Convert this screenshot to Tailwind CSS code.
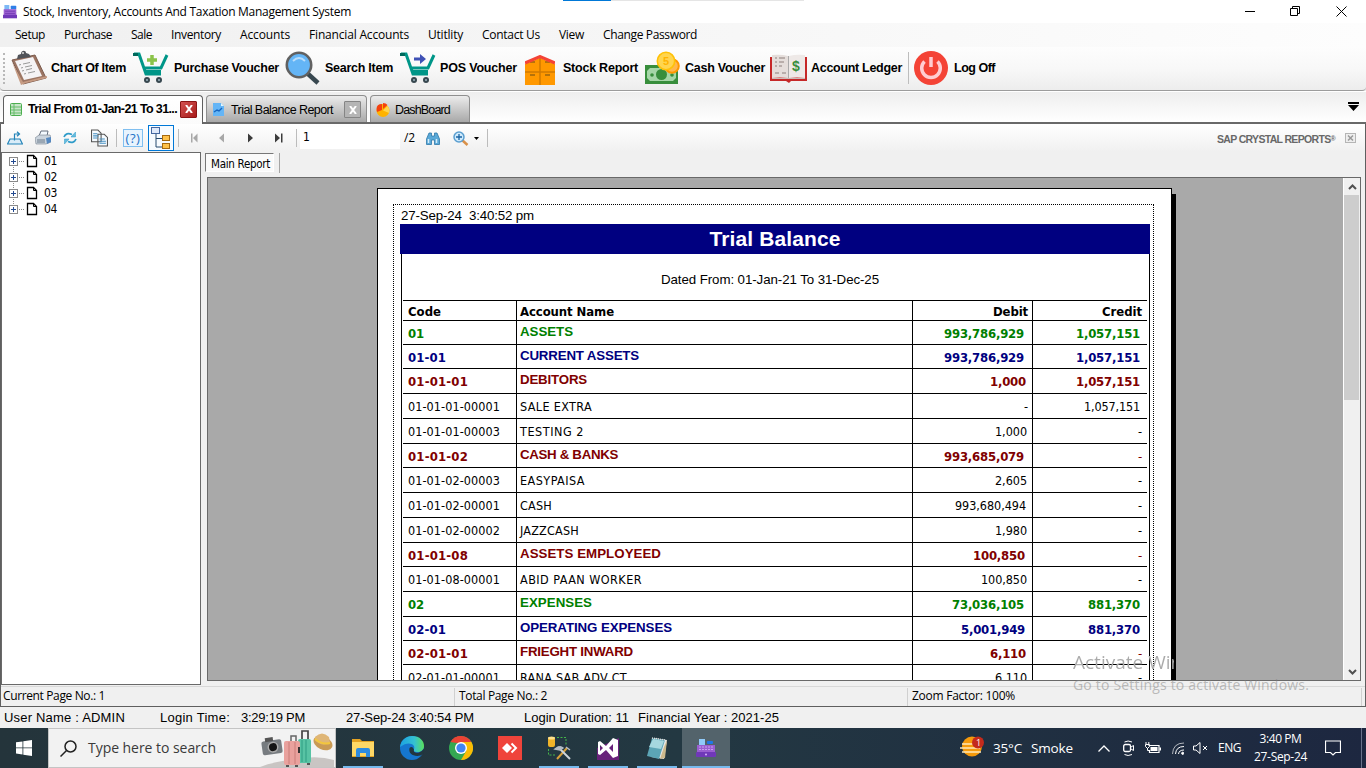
<!DOCTYPE html>
<html lang="en">
<head>
<meta charset="utf-8">
<title>Stock, Inventory, Accounts And Taxation Management System</title>
<script src="https://cdn.jsdelivr.net/npm/@tailwindcss/browser@4"></script>
</head>
<body class="h-[768px] w-[1366px] overflow-hidden bg-[#f0f0f0] font-['Open_Sans',sans-serif] text-[12px] leading-4 text-black whitespace-nowrap">
<svg class="hidden">
  <symbol id="register" viewBox="0 0 20 20"><rect x="3" y="1" width="6" height="8" fill="#90caf9"/><rect x="11" y="3" width="6" height="3" rx="1" fill="#1e78e8"/><path d="M1 7h18v8H1z" fill="#9a5fd0"/><path d="M3 9h14M3 11.500h14" stroke="#c9a0f0" stroke-dasharray="2 1"/><rect x="0" y="14" width="20" height="5" rx="1" fill="#7038b8"/><circle cx="10" cy="16.500" r="1" fill="#d1b3f5"/></symbol>
  <symbol id="cart" viewBox="0 0 36 34"><path d="M1 3h5l7 20h15M11 17h17l6-13" fill="none" stroke="#009688" stroke-width="3"/><path d="M12 19h16v4H12z" fill="#009688"/><path d="M0 2h5v3H0z" fill="#00695c"/><circle cx="14" cy="29" r="3" fill="#37474f"/><circle cx="26" cy="29" r="3" fill="#37474f"/><circle cx="14" cy="29" r="1" fill="#9eb4bf"/><circle cx="26" cy="29" r="1" fill="#9eb4bf"/></symbol>
  <symbol id="doc" viewBox="0 0 12 14"><path d="M1.500 1.500h6l3 3v8h-9z" fill="#fff" stroke="#000" stroke-width="1.300"/><path d="M7.500 1.500v3h3" fill="none" stroke="#000"/></symbol>
</svg>

<header class="relative flex h-[23px] items-center bg-white pl-[3px]">
  <svg class="h-[14px] w-[14px]" viewBox="0 0 20 20" preserveAspectRatio="none"><rect x="2" y="0" width="7" height="8" fill="#7db8f5"/><rect x="11" y="1" width="8" height="5" rx="1" fill="#2f7fe8"/><path d="M1 6h18v9H1z" fill="#9a5fd0"/><path d="M0 14h20v5H0z" fill="#7038b8"/><path d="M3 9h14M3 12h14" stroke="#7a42b8" stroke-width="1.500"/></svg>
  <span class="ml-[6px]" data-w="328">Stock, Inventory, Accounts And Taxation Management System</span>
  <div class="absolute left-[563px] top-0 flex h-px w-[241px] bg-[#e5e5e5]"><i class="h-px w-[48px] bg-[#0078d7]"></i></div>
  <svg class="ml-auto mr-[17px] mb-[2px] h-[14px] w-[104px]" viewBox="0 0 104 14" fill="none" stroke="#000"><path d="M0 7.500h10M45.500 4.500h7v7h-7zM47.500 4V2.500h7v7H53M91.500 2.500l10 10M101.500 2.500l-10 10"/></svg>
</header>

<nav class="flex h-6 items-center gap-[19px] bg-gradient-to-r from-[#f0f0f0] to-[#fdfdfd] pl-[15px]">
  <span data-w="30">Setup</span><span data-w="48">Purchase</span><span data-w="21">Sale</span><span data-w="50">Inventory</span><span data-w="50">Accounts</span><span data-w="100">Financial Accounts</span><span data-w="35">Utitlity</span><span data-w="58">Contact Us</span><span data-w="25">View</span><span data-w="94">Change Password</span>
</nav>

<section class="flex h-[44px] items-center rounded-b-sm border-b border-[#9c9c9c] bg-gradient-to-b from-[#fdfdfd] via-[#f8f8f8] to-[#ededed] pb-px font-['Liberation_Sans',sans-serif] text-[12.500px] font-bold">
  <i class="ml-[3px] mr-[6px] h-[31px] w-0 border-l-2 border-dotted border-[#b8b8b8]"></i>
  <svg class="h-9 w-[36px]" viewBox="0 0 36 36"><path d="M1 10L24 5L35 28L12 34Z" fill="#9c7563" stroke="#7b5a4c"/><path d="M1 12L10 35L15 33L36 28V26L12 32Z" fill="#c69b83"/><path d="M4 11L22 7L31 26L13 30Z" fill="#f5f3f5"/><path d="M8 15l2-.5M12 14l7-1.500M10 18l2-.5M14 17l7-1.500M11 21l2-.5M15 20l6-1.500M13 24l2-.5M17 23l7-1.500" stroke="#999"/><path d="M6 9l1-4 3-1c0-4 5-4 5-1l3 1 2 3z" fill="#505359"/><circle cx="12" cy="3" r="1" fill="#ddd"/></svg>
  <span class="ml-1" data-w="75">Chart Of Item</span>
  <div class="relative ml-[7px] h-[34px] w-9"><svg class="h-[34px] w-9"><use href="#cart"/></svg><svg class="absolute left-[14px] top-[4px] h-[10px] w-[10px]" viewBox="0 0 10 10"><path d="M5 0v10M0 5h10" stroke="#8bc34a" stroke-width="3.500"/></svg></div>
  <span class="ml-[5px]" data-w="105">Purchase Voucher</span>
  <svg class="ml-[6px] h-[34px] w-[35px]" viewBox="0 0 35 34"><path d="M22 22l11 10" stroke="#37474f" stroke-width="4.500"/><circle cx="14" cy="14" r="12.200" fill="#64b5f6" stroke="#616161" stroke-width="2.600"/><path d="M8 10q6-6 12 0" stroke="#bbdefb" stroke-width="1.800" fill="none"/></svg>
  <span class="ml-[5px]" data-w="68">Search Item</span>
  <div class="relative ml-[7px] h-[34px] w-9"><svg class="h-[34px] w-9"><use href="#cart"/></svg><svg class="absolute left-[14px] top-[3px] h-[10px] w-[12px]" viewBox="0 0 12 10"><path d="M0 3.500h6V0l6 5-6 5V6.500H0z" fill="#3f51b5"/></svg></div>
  <span class="ml-[4px]" data-w="77">POS Voucher</span>
  <svg class="ml-[8px] mt-[3px] h-[30px] w-[30px]" viewBox="0 0 30 30"><path d="M0 9L15 3L30 9V30H0z" fill="#ff9800"/><path d="M15 3v27M0 17h30" stroke="#d17a00" stroke-width="1.500"/><path d="M5 7h5M20 7h5M5 20h5M20 20h5" stroke="#6b4c17"/><path d="M0 8L15 1.500L30 8" stroke="#f44336" stroke-width="3" fill="none"/></svg>
  <span class="ml-[8px]" data-w="75">Stock Report</span>
  <svg class="ml-[7px] h-[34px] w-[35px]" viewBox="0 0 35 34"><rect y="14" width="33" height="19" fill="#388e3c"/><path d="M5 17h23l3 3v7l-3 3H5l-3-3v-7z" fill="#a5d6a7"/><circle cx="16.500" cy="23.500" r="5.500" fill="#388e3c"/><circle cx="7" cy="24" r="1.800" fill="#388e3c"/><circle cx="27" cy="24" r="1.800" fill="#388e3c"/><circle cx="27" cy="15" r="6.800" fill="#ffb74d" stroke="#ff9800" stroke-width="2"/><circle cx="21" cy="10" r="8.700" fill="#ffd54f" stroke="#ffc107" stroke-width="1.600"/><text x="18" y="14" font-size="11" fill="#ffb300" font-weight="bold">5</text></svg>
  <span class="ml-[5px]" data-w="80">Cash Voucher</span>
  <svg class="ml-[5px] h-[30px] w-[37px]" viewBox="0 0 37 30"><path d="M0 4h37v24H21l-2 2-3-2H0z" fill="#c62828"/><path d="M2 2q9-1 16 1v22q-8-1-16 0z" fill="#e5dedb"/><path d="M35 2q-9-1-16 1v22q8-1 16 0z" fill="#eee9e7"/><path d="M2 25.500h33" stroke="#c9bcb8"/><path d="M18.500 3v22" stroke="#aaa"/><path d="M5 5h2M9 5h6M5 9h2M9 9h5M5 13h2M9 13h3M5 20h4M12 20h4" stroke="#8d7f7a"/><text x="22" y="18" font-size="14" fill="#388e3c" font-weight="bold">$</text></svg>
  <span class="ml-[4px]" data-w="91">Account Ledger</span>
  <i class="ml-[6px] mr-[5px] h-8 w-px bg-[#bdbdbd]"></i>
  <svg class="h-[34px] w-[34px]" viewBox="0 0 34 34"><circle cx="17" cy="17" r="17" fill="#f44336"/><path d="M10.500 10.500A9.300 9.300 0 1 0 23.500 10.500M17 6v10" fill="none" stroke="#ffcdd2" stroke-width="3.500"/></svg>
  <span class="ml-[6px]" data-w="41">Log Off</span>
</section>

<section class="flex h-[33px] items-end border-b-2 border-[#696969] border-t border-t-white bg-gradient-to-b from-[#eeeeee] to-white pl-[3px] font-['Liberation_Sans',sans-serif] text-[13px]">
  <div class="-mb-[2px] flex h-[29px] w-[200px] items-center rounded-t border border-b-0 border-[#5f5f5f] bg-gradient-to-b from-white to-[#fbfbfb] pb-[2px] pl-[6px]">
    <svg class="h-[13px] w-3" viewBox="0 0 12 13"><rect x=".5" y=".5" width="11" height="12" rx="1" fill="#c8e6c9" stroke="#4caf50"/><path d="M1 4h10M1 7h10M1 10h10M4 1v11" stroke="#66bb6a"/></svg>
    <span class="ml-[6px] text-[12.500px] font-bold" data-w="149">Trial From 01-Jan-21 To 31...</span>
    <span class="ml-[3px] flex h-[17px] w-[17px] items-center justify-center rounded-[1px] border border-[#8b1515] bg-gradient-to-br from-[#d35050] to-[#a81818]"><svg class="h-2 w-2" viewBox="0 0 8 8"><path d="M1 0l6 8M7 0L1 8" stroke="#fff" stroke-width="2"/></svg></span>
  </div>
  <div class="ml-[3px] flex h-[27px] w-[161px] items-center rounded-t border border-b-0 border-[#8f8f8f] bg-gradient-to-b from-[#ececec] to-[#a9a9a9] pl-[6px] pt-px text-[12.500px]">
    <svg class="h-[14px] w-[11px]" viewBox="0 0 11 14"><path d="M0 0h8l3 3v10H0z" fill="#64b5f6"/><path d="M8 0v3h3" fill="#e1f5fe"/><path d="M1 9l3-2 2 1 3-3" stroke="#1565c0" stroke-width="1.400" fill="none"/></svg>
    <span class="ml-[7px]" data-w="102">Trial Balance Report</span>
    <span class="ml-[11px] flex h-[17px] w-[17px] items-center justify-center rounded-[1px] border border-[#858585] bg-[#b5b5b5]"><svg class="h-2 w-2" viewBox="0 0 8 8"><path d="M1 0l6 8M7 0L1 8" stroke="#fff" stroke-width="2"/></svg></span>
  </div>
  <div class="ml-[3px] flex h-[27px] w-[100px] items-center rounded-t border border-b-0 border-[#8f8f8f] bg-gradient-to-b from-[#ececec] to-[#a9a9a9] pl-[5px] pt-px text-[12.500px]">
    <svg class="h-[14px] w-[14px]" viewBox="0 0 14 14"><circle cx="7" cy="7.500" r="6.500" fill="#ffb300"/><path d="M7 7.500L11.500 3Q14 6 13 10z" fill="#ffd54f"/><path d="M6 7L1 9Q-1 1 6 1zM7 6V0q3 0 4.500 2z" fill="#f4400f"/></svg>
    <span class="ml-[5px]" data-w="55">DashBoard</span>
  </div>
  <svg class="mb-[11px] ml-auto mr-[7px] h-[9px] w-[11px]" viewBox="0 0 11 9"><path d="M0 0h11v2H0zM0 3h11L5.500 9z"/></svg>
</section>

<main class="h-[583px] border-x border-b border-[#5f5f5f] bg-[#f0f0f0]">
  <div class="flex h-[28px] items-center bg-gradient-to-b from-white to-[#f0f0f0] text-[12px]">
    <svg class="ml-[6px] h-[14px] w-4" viewBox="0 0 16 14" fill="none"><path d="M3 8h10l2.500 5H.5z" fill="#d9ecf8" stroke="#2383b8" stroke-width="1.200"/><path d="M7.500 9.500V3h4M10 .8L12.500 3L10 5.200" stroke="#2383b8" stroke-width="1.200"/></svg>
    <svg class="ml-3 h-[16px] w-4" viewBox="0 0 16 16"><path d="M4 6l2-5h7l-1 5z" fill="#f4faff" stroke="#667080"/><path d="M0 8l4-3h11l1 2v5l-5 2H1z" fill="#cbd4dd" stroke="#76828e" stroke-width=".6"/><path d="M11 8l5-1v5l-4 2z" fill="#5588c0"/><path d="M2 10h8M2 12h8" stroke="#6a7a8a"/></svg>
    <svg class="ml-3 h-3 w-[14px]" viewBox="0 0 14 12" fill="none" stroke="#2e9bc9" stroke-width="1.700"><path d="M1 5Q3 0 9 2.500M13 7Q11 12 5 9.500"/><path d="M12.500 0v5H8zM1.500 12V7H6z" fill="#64bde0" stroke-width=".5"/></svg>
    <svg class="ml-[14px] h-[18px] w-[17px]" viewBox="0 0 16 16"><path d="M.5.5h6l3 3v8h-9zM6.500 4.500h6l3 3v8h-9z" fill="#f6fbff" stroke="#555"/><path d="M2 4h4M2 6h5M2 8h4M8 9h5M8 11h6M8 13h6" stroke="#4690c2"/></svg>
    <i class="ml-[8px] h-[18px] w-px bg-[#bcbcbc]"></i>
    <div class="ml-[6px] flex h-[18px] w-[20px] items-center justify-center border border-[#80bff0] bg-[#e8f4fe] text-[13px] text-[#1e73c8]"><span data-w="15">(?)</span></div>
    <div class="ml-[5px] flex h-[26px] w-[26px] items-center justify-center border border-[#0078d7] bg-[#f7fbff]"><svg class="h-[22px] w-5" viewBox="0 0 20 22"><path d="M5 7v13h6M5 11.500h6" fill="none" stroke="#264a6e"/><rect x=".5" y=".5" width="8" height="6" fill="#dfe9fa" stroke="#4467a0"/><rect x="11.500" y="8.500" width="7" height="5" fill="#ffc24a" stroke="#a66a10"/><rect x="11.500" y="16.500" width="7" height="5" fill="#ffc24a" stroke="#a66a10"/></svg></div>
    <i class="ml-[4px] h-[18px] w-px bg-[#bcbcbc]"></i>
    <svg class="ml-[12px] h-[10px] w-[93px]" viewBox="0 0 93 10"><path d="M0 .5h1.500v9H0zM6.500 .5v9L2 5zM33 .5v9L28 5z" fill="#a8a8a8"/><path d="M57 .5v9L62 5zM84 .5v9L89 5zM90 .5h1.500v9H90z" fill="#3c3c3c"/></svg>
    <i class="ml-[12px] h-[18px] w-px bg-[#bcbcbc]"></i>
    <div class="ml-[3px] h-[22px] w-[100px] bg-white pl-[3px] pt-[2px] font-['DejaVu_Sans_Condensed',sans-serif]">1</div>
    <span class="ml-1" data-w="11">/2</span>
    <svg class="ml-[11px] h-[13px] w-[14px]" viewBox="0 0 14 13"><path d="M3 1h2.500v3h3V1H11l2.500 6v5.500H8.500V8h-3v4.500H.5V7z" fill="#5aa9d8" stroke="#2f79aa" stroke-width=".8"/><path d="M2.500 7v4M10.500 7v4" stroke="#d5edfa" stroke-width="1.500"/></svg>
    <svg class="ml-[13px] h-[15px] w-[16px]" viewBox="0 0 16 15"><path d="M9 9l5.500 5" stroke="#d9914a" stroke-width="2.500"/><circle cx="6" cy="6" r="5" fill="#cfeafc" stroke="#5b9fd0" stroke-width="1.500"/><path d="M6 3v6M3 6h6" stroke="#1b64a4" stroke-width="1.300"/></svg>
    <svg class="ml-[5px] h-[3px] w-[5px]" viewBox="0 0 5 3"><path d="M0 0h5L2.500 3z"/></svg>
    <i class="ml-2 h-[18px] w-px bg-[#bcbcbc]"></i>
    <span class="ml-auto mt-[4px] font-['Liberation_Sans',sans-serif] text-[10.500px] font-bold text-[#686868]" data-w="118">SAP CRYSTAL REPORTS<span class="relative -top-[2px] text-[7px]">®</span></span>
    <svg class="ml-[10px] mr-[9px] h-[10px] w-[11px]" viewBox="0 0 11 10"><rect x=".5" y=".5" width="10" height="9" fill="#eee" stroke="#b5b5b5"/><path d="M3 2.500l5 5M8 2.500l-5 5" stroke="#999" stroke-width="1.500"/></svg>
  </div>

  <div class="flex h-[533px]">
    <aside class="h-[533px] w-[200px] border border-[#696969] bg-white pl-[7px] font-['DejaVu_Sans_Condensed',sans-serif]">
      <div id="tree" class="flex flex-col"></div>
    </aside>
    <div class="ml-[4px] h-[533px] grow">
      <div class="flex h-[25px] font-['DejaVu_Sans_Condensed',sans-serif]">
        <div class="mt-px h-[19px] w-[69px] border border-[#fff] border-l-[#777] border-t-[#777] bg-[#fafafa] pl-[5px] pt-[2px] text-[11.500px]"><span data-w="59">Main Report</span></div>
        <i class="ml-[5px] mt-px h-5 w-px bg-[#a5a5a5]"></i>
      </div>
      <div class="ml-[2px] flex h-[504px] w-[1154px] overflow-hidden border border-[#696969] bg-[#a9a9a9]">
        <div class="flex grow items-start pl-[169px] pt-[10px]">
          <article class="h-[600px] w-[795px] shrink-0 border border-black bg-white px-[15px] pt-[15px]">
            <div class="h-[560px] w-[761px] border border-dotted border-black pl-[6px] font-['Liberation_Sans',sans-serif]">
              <p class="h-[19px] pl-[1px] pt-[3px] text-[13.300px]"><span data-w="133">27-Sep-24&nbsp; 3:40:52 pm</span></p>
              <div class="h-[30px] w-[750px] bg-[#000080] text-center text-[21px] font-bold leading-[30px] text-white"><span data-w="131">Trial Balance</span></div>
              <div class="ml-px w-[749px] border-x border-black pl-px">
                <p class="h-[46px] pl-[258px] pt-[18px] text-[13.300px]"><span data-w="218">Dated From: 01-Jan-21 To 31-Dec-25</span></p>
                <div id="rows" class="w-[744px]"></div>
              </div>
            </div>
          </article>
          <i class="mt-[6px] h-[600px] w-1 bg-black"></i>
        </div>
        <div class="h-[502px] w-[17px] border-l border-white bg-[#f0f0f0]">
          <svg class="mx-auto h-[17px] w-[9px]" viewBox="0 0 9 17"><path d="M1 11l3.500-3.500L8 11" fill="none" stroke="#505050" stroke-width="2"/></svg>
          <div class="h-[205px] w-[15px] bg-[#cdcdcd]"></div>
          <svg class="mx-auto mt-[263px] h-[17px] w-[9px]" viewBox="0 0 9 17"><path d="M1 7l3.500 3.500L8 7" fill="none" stroke="#505050" stroke-width="2"/></svg>
        </div>
      </div>
    </div>
  </div>
  <div class="mt-px flex h-[20px] items-center border-t border-[#d8d8d8] pl-[2px]">
    <span class="h-[18px] w-[451px]"><span data-w="102">Current Page No.: 1</span></span>
    <span class="h-[18px] w-[453px] border-l border-[#d0d0d0] pl-[4px]"><span data-w="88">Total Page No.: 2</span></span>
    <span class="h-[18px] w-[455px] border-x border-[#d0d0d0] pl-[4px]"><span data-w="103">Zoom Factor: 100%</span></span>
  </div>
</main>

<footer class="flex h-[21px] items-center pl-1 font-['Liberation_Sans',sans-serif] text-[13px]">
  <span class="w-[156px]"><span data-w="121">User Name : ADMIN</span></span>
  <span class="w-[81px]"><span data-w="70">Login Time:</span></span>
  <span class="w-[105px]"><span data-w="64">3:29:19 PM</span></span>
  <span class="w-[178px]"><span data-w="128">27-Sep-24 3:40:54 PM</span></span>
  <span class="w-[114px]"><span data-w="105">Login Duration: 11</span></span>
  <span data-w="141">Financial Year : 2021-25</span>
</footer>

<section class="flex h-10 items-center bg-gradient-to-r from-[#24343b] via-[#233842] to-[#1d2740] text-white">
  <div class="flex h-10 w-12 items-center justify-center"><svg class="h-4 w-4" viewBox="0 0 16 16" fill="#fff"><path d="M0 2.300l6.500-.9v6.100H0zM7.300 1.300L16 0v7.500H7.300zM0 8.300h6.500v6.200L0 13.600zM7.300 8.300H16V16l-8.700-1.300z"/></svg></div>
  <div class="flex h-10 w-[288px] items-center border border-[#c4c4c4] bg-[#f2f2f2] pl-[11px] text-[14px] text-[#3a3a3a]">
    <svg class="h-[17px] w-[17px]" viewBox="0 0 17 17" fill="none" stroke="#222" stroke-width="1.500"><circle cx="10.500" cy="6.500" r="5.500"/><path d="M6.500 10.500L.5 16.500"/></svg>
    <span class="ml-[11px]" data-w="128">Type here to search</span>
    <svg class="ml-auto mr-[1px] h-[38px] w-[76px]" viewBox="0 0 76 38"><path d="M2 38Q14 33 38 30Q60 26 76 31v7z" fill="#c9c5c3"/><g transform="rotate(-8 16 18)"><rect x="4" y="11" width="20" height="14" rx="2" fill="#777c80"/><rect x="8" y="8" width="8" height="4" fill="#555"/><circle cx="15" cy="18" r="5.500" fill="#aaa"/><circle cx="15" cy="18" r="4" fill="#151515"/></g><path d="M44 10V2h6v9" fill="none" stroke="#444" stroke-width="1.700"/><rect x="40" y="10" width="13" height="24" rx="2" fill="#58c3a4"/><path d="M44 11v22M48 11v22" stroke="#2f9d83"/><path d="M33 13V7h5v6" fill="none" stroke="#666" stroke-width="1.500"/><rect x="26" y="12" width="16" height="24" rx="2" fill="#e9a19d"/><path d="M31 13v22M37 13v22" stroke="#c97c79"/><path d="M41 18v6" stroke="#333" stroke-width="2"/><path d="M28 37h3M37 37h3M49 35h3" stroke="#555" stroke-width="2"/><ellipse cx="65" cy="14" rx="10" ry="6.500" transform="rotate(25 65 14)" fill="#c99a55"/><path d="M57 8q7-7 14 0l1 6q-9 4-15-3z" fill="#dfb677"/><path d="M57 10q7 6 15 4" fill="none" stroke="#f3c63d" stroke-width="2"/></svg>
  </div>
  <div class="flex h-10 items-stretch pl-[7px]">
    <div class="mr-[9px] flex w-10 items-center justify-center border-b-2 border-[#76b9ed] pt-[2px]"><svg class="h-[18px] w-[22px]" viewBox="0 0 22 18"><path d="M0 0h8l2 2h12v16H0z" fill="#e5a323"/><path d="M0 3h22v14H0z" fill="#ffd866"/><path d="M4 18v-7q0-2 2-2h10q2 0 2 2v7h-4v-4H8v4z" fill="#2f8ce0"/></svg></div>
    <div class="mr-[9px] flex w-10 items-center justify-center border-b-2 border-transparent pt-[2px]"><svg class="h-6 w-6" viewBox="0 0 24 24"><defs><linearGradient id="e"><stop stop-color="#1ba1e2"/><stop offset=".6" stop-color="#35c1d1"/><stop offset="1" stop-color="#5be05a"/></linearGradient></defs><circle cx="12" cy="12" r="12" fill="#1576cf"/><path d="M0 11C1 4 6 0 12 0c8 0 12 5 12 10 0 4-3 6-7 6-3 0-4-1-3-3 2-4-5-9-14-2z" fill="url(#e)"/><path d="M14 13.500C13 16 16 17.500 19 16.500Q22 15.500 24 12.500L24 17.500L20.500 19.500C14 21 8 18 9.500 12Q12 9.500 14 13.500z" fill="#22363f"/></svg></div>
    <div class="mr-[9px] flex w-10 items-center justify-center border-b-2 border-transparent pt-[2px]"><svg class="h-6 w-6" viewBox="0 0 24 24"><circle cx="12" cy="12" r="12" fill="#34a853"/><path d="M12 12L1.600 6A12 12 0 0 1 22.400 6z" fill="#ea4335"/><path d="M12 6h10.400A12 12 0 0 1 12 24l5.200-9z" fill="#fbbc05"/><path d="M1.600 6L7 15l3-8z" fill="#34a853"/><path d="M1.600 6A12 12 0 0 1 12 0v7z" fill="#ea4335"/><circle cx="12" cy="12" r="6" fill="#fff"/><circle cx="12" cy="12" r="4.600" fill="#4285f4"/></svg></div>
    <div class="mr-[9px] flex w-10 items-center justify-center border-b-2 border-transparent pt-[2px]"><svg class="h-6 w-6" viewBox="0 0 24 24"><path d="M0 0h24v24H0z" fill="#ef443b"/><path d="M9 7l5 5-5 5-5-5z" fill="#fff"/><path d="M13.500 7.500L18 12l-4.500 4.500" fill="none" stroke="#fff" stroke-width="2"/></svg></div>
    <div class="mr-[9px] flex w-10 items-center justify-center border-b-2 border-[#76b9ed] pt-[2px]"><svg class="h-6 w-6" viewBox="0 0 24 24"><rect x="1" y="1" width="7" height="10" rx="2" fill="#f0b429"/><ellipse cx="4.500" cy="2" rx="3.500" ry="1.500" fill="#ffe08a"/><path d="M10 1.500h9V10M1.500 13v6H8" fill="none" stroke="#45b649" stroke-dasharray="2 1.500"/><path d="M10 23L20 12" stroke="#d9a13b" stroke-width="2"/><path d="M11 11l12 12" stroke="#cfd6db" stroke-width="2"/><path d="M8 13q5-4 8-1l-3 2zM19 11l4 3" stroke="#b4bdc5" fill="#b4bdc5" stroke-width="1.500"/></svg></div>
    <div class="mr-[9px] flex w-10 items-center justify-center border-b-2 border-[#76b9ed] pt-[2px]"><svg class="h-6 w-[22px]" viewBox="0 0 22 24"><path d="M0 12v12h22V2z" fill="#68217a"/><path d="M1 6l2-1 6 5 7-8 5 2v16l-5 2-7-8-6 5-2-1zM3 9v6l3-3zM16 8l-4 4 4 4z" fill="#fff" fill-rule="evenodd"/></svg></div>
    <div class="mr-[5px] flex w-10 items-center justify-center border-b-2 border-[#76b9ed] pt-[2px]"><svg class="h-6 w-[22px]" viewBox="0 0 22 24"><path d="M8 2l13 2-3 19-13-2z" fill="#e6e6e6"/><path d="M6 2l13 2-6 19-12-3z" fill="#5ca5b6"/><path d="M7 3l11 2-3 8-12-2z" fill="#a6d7df"/><path d="M6 2l13 2" stroke="#ddd" stroke-width="1.500" stroke-dasharray="1 1"/><path d="M18 11l3-7-2 18-5 1z" fill="#ccb98d"/></svg></div>
    <div class="flex w-12 items-center justify-center border-b-2 border-[#76b9ed] bg-[#53636b] pt-[2px]"><svg class="h-[20px] w-[20px]"><use href="#register"/></svg></div>
  </div>
  <div class="ml-auto flex h-10 items-center text-[13.500px]">
    <svg class="mb-[3px] h-[21px] w-[25px]" viewBox="0 0 25 21"><circle cx="12" cy="10.500" r="10" fill="#f59a0c"/><path d="M2 8h13M0 12h20M2 16h19" stroke="#ffe9b8" stroke-width="1.500"/><circle cx="18" cy="6.500" r="6" fill="#c42b1c"/><text x="16" y="10" font-size="9" fill="#fff">1</text></svg>
    <span class="ml-[8px] w-[38px]"><span data-w="29">35°C</span></span>
    <span data-w="42">Smoke</span>
    <svg class="ml-[25px] h-[7px] w-3" viewBox="0 0 12 7"><path d="M.5 6.500L6 1l5.500 5.500" fill="none" stroke="#fff" stroke-width="1.300"/></svg>
    <svg class="ml-[13px] h-4 w-[11px]" viewBox="0 0 11 16" fill="none" stroke="#fff"><path d="M1.500 2Q5 0 9 2M1.500 14.500Q5 16.500 9 14.500"/><rect x=".7" y="4.500" width="6.800" height="7" rx="1.500" stroke-width="1.300"/><path d="M8 7l2.500-1.500v5L8 9"/></svg>
    <svg class="ml-[11px] h-3 w-[16px]" viewBox="0 0 16 12"><path d="M3.500 3.500h10.500v7H4.500V8" fill="none" stroke="#fff" stroke-width="1.200"/><path d="M5.500 5h7v4h-7zM14.500 5.500h1.500v3h-1.500z" fill="#fff"/><path d="M1 0v2M3.800 0v2M.5 2.500h4v2L2.500 6.500L.5 4.500zM2.500 6v2.500h2" stroke="#fff" fill="none"/></svg>
    <svg class="ml-[11px] h-[13px] w-[12px]" viewBox="0 0 12 13" fill="none" stroke="#fff"><path d="M.5 12Q1 1 12 1" opacity=".65"/><path d="M3.500 12Q4 4.500 12 4.500M6.500 12Q7 8 12 8"/><circle cx="10.700" cy="11.300" r="1.100" fill="#fff"/></svg>
    <svg class="ml-[9px] h-[12px] w-[15px]" viewBox="0 0 15 12" fill="none" stroke="#fff"><path d="M.5 4h2.500l4-3.500v11L3 8H.5zM10 4l4 4M14 4l-4 4"/></svg>
    <span class="ml-[10px] text-[12px]" data-w="23">ENG</span>
    <div class="ml-[13px] flex w-[53px] flex-col items-center text-[12px] leading-[18px]"><span data-w="42">3:40 PM</span><span data-w="53">27-Sep-24</span></div>
    <svg class="ml-[18px] h-4 w-4" viewBox="0 0 16 16" fill="none" stroke="#fff"><path d="M.5 1h15v11.500h-5L8 15l-2.500-2.500h-5z" stroke-width="1.200"/></svg>
    <i class="ml-[20px] h-10 w-[5px] border-l border-[#69728a]"></i>
  </div>
</section>

<aside class="pointer-events-none absolute left-[1073px] top-[649px] text-[#828282]/50">
  <p class="h-[26px] text-[19px] leading-[27px]"><span class="bg-gradient-to-r from-[#aaaaaa] from-[65%] to-transparent to-[65%] bg-clip-text text-transparent" data-w="156">Activate Windows</span></p>
  <p class="text-[14px] leading-[20px]"><span data-w="236">Go to Settings to activate Windows.</span></p>
</aside>

<script>
const tree = document.getElementById('tree');
['01', '02', '03', '04'].forEach((code, i) => {
  tree.insertAdjacentHTML('beforeend', `<div class="flex h-4 items-center">
    <svg class="h-4 w-[17px]" viewBox="0 0 17 16"><path d="${i ? 'M4.500 0v4' : ''}${i < 3 ? 'M4.500 12v4' : ''}M10 8.500h5" stroke="#888" stroke-dasharray="1 1"/><rect x=".5" y="4.500" width="8" height="8" fill="#fff" stroke="#8a8a8a"/><path d="M2 8.500h5M4.500 6v5" stroke="#234a90"/></svg>
    <svg class="h-[14px] w-3"><use href="#doc"/></svg><span class="ml-[6px]" data-w="13">${code}</span></div>`);
});

const tone = { g: 'text-[#008000]', b: 'text-[#000080]', r: 'text-[#800000]' };
// height, tone, code, width, name, width, debit, width, inset, credit, width
const rows = [
  [20, 'h', 'Code', 33, 'Account Name', 94, 'Debit', 35, 4, 'Credit', 40],
  [24, 'g', '01', 16, 'ASSETS', 53, '993,786,929', 80, 8, '1,057,151', 64],
  [24, 'b', '01-01', 38, 'CURRENT ASSETS', 119, '993,786,929', 80, 8, '1,057,151', 64],
  [25, 'r', '01-01-01', 60, 'DEBITORS', 67, '1,000', 36, 6, '1,057,151', 64],
  [25, '', '01-01-01-00001', 92, 'SALE EXTRA', 72, '-', 4, 4, '1,057,151', 56],
  [25, '', '01-01-01-00003', 92, 'TESTING 2', 64, '1,000', 32, 5, '-', 4],
  [24, 'r', '01-01-02', 60, 'CASH & BANKS', 98, '993,685,079', 80, 8, '-', 4],
  [25, '', '01-01-02-00003', 92, 'EASYPAISA', 65, '2,605', 32, 5, '-', 4],
  [25, '', '01-01-02-00001', 92, 'CASH', 32, '993,680,494', 71, 6, '-', 4],
  [25, '', '01-01-02-00002', 92, 'JAZZCASH', 59, '1,980', 32, 5, '-', 4],
  [24, 'r', '01-01-08', 60, 'ASSETS EMPLOYEED', 141, '100,850', 52, 7, '-', 4],
  [25, '', '01-01-08-00001', 92, 'ABID PAAN WORKER', 122, '100,850', 46, 5, '-', 4],
  [25, 'g', '02', 16, 'EXPENSES', 72, '73,036,105', 72, 8, '881,370', 52],
  [24, 'b', '02-01', 38, 'OPERATING EXPENSES', 152, '5,001,949', 64, 7, '881,370', 52],
  [24, 'r', '02-01-01', 60, 'FRIEGHT INWARD', 113, '6,110', 36, 6, '-', 4],
  [25, '', '02-01-01-00001', 92, 'RANA SAB ADV CT', 107, '6,110', 32, 5, '-', 4],
];
const box = document.getElementById('rows');
rows.forEach(([h, t, code, cw, name, nw, debit, dw, inset, credit, rw]) => {
  const heavy = t ? 'text-[13px] font-bold' : 'text-[12.500px]';
  const pad = h === 25 && t !== 'r' ? 'pt-px' : 'pt-[2px]';
  const label = tone[t] ? "font-['Liberation_Sans',sans-serif] text-[13.300px] pb-[4px]" : '';
  const dash = credit === '-' ? 'font-normal' : '';
  box.insertAdjacentHTML('beforeend', `<div class="grid grid-cols-[113px_396px_120px_115px] border-t border-black font-['DejaVu_Sans_Condensed',sans-serif] ${heavy} ${tone[t] || ''}" style="height:${h}px">
    <div class="flex items-center pl-[5px] ${pad}"><span data-w="${cw}">${code}</span></div>
    <div class="flex items-center border-l border-black pl-[3px] ${pad}"><span class="${label}" data-w="${nw}">${name}</span></div>
    <div class="flex items-center justify-end border-l border-black ${pad}" style="padding-right:${inset}px"><span data-w="${dw}">${debit}</span></div>
    <div class="flex items-center justify-end border-l border-black ${pad}" style="padding-right:${credit === '-' || t === 'h' ? 5 : 7}px"><span class="${dash}" data-w="${rw}">${credit}</span></div>
  </div>`);
});

function fitLabels() {
  document.querySelectorAll('[data-w]').forEach(el => {
    el.classList.add('inline-block');
    el.style.letterSpacing = '0px';
    const gap = (el.dataset.w - el.getBoundingClientRect().width) / el.textContent.length;
    el.style.letterSpacing = gap.toFixed(3) + 'px';
  });
}
window.addEventListener('load', () => { fitLabels(); document.fonts.ready.then(fitLabels); });
</script>
</body>
</html>
